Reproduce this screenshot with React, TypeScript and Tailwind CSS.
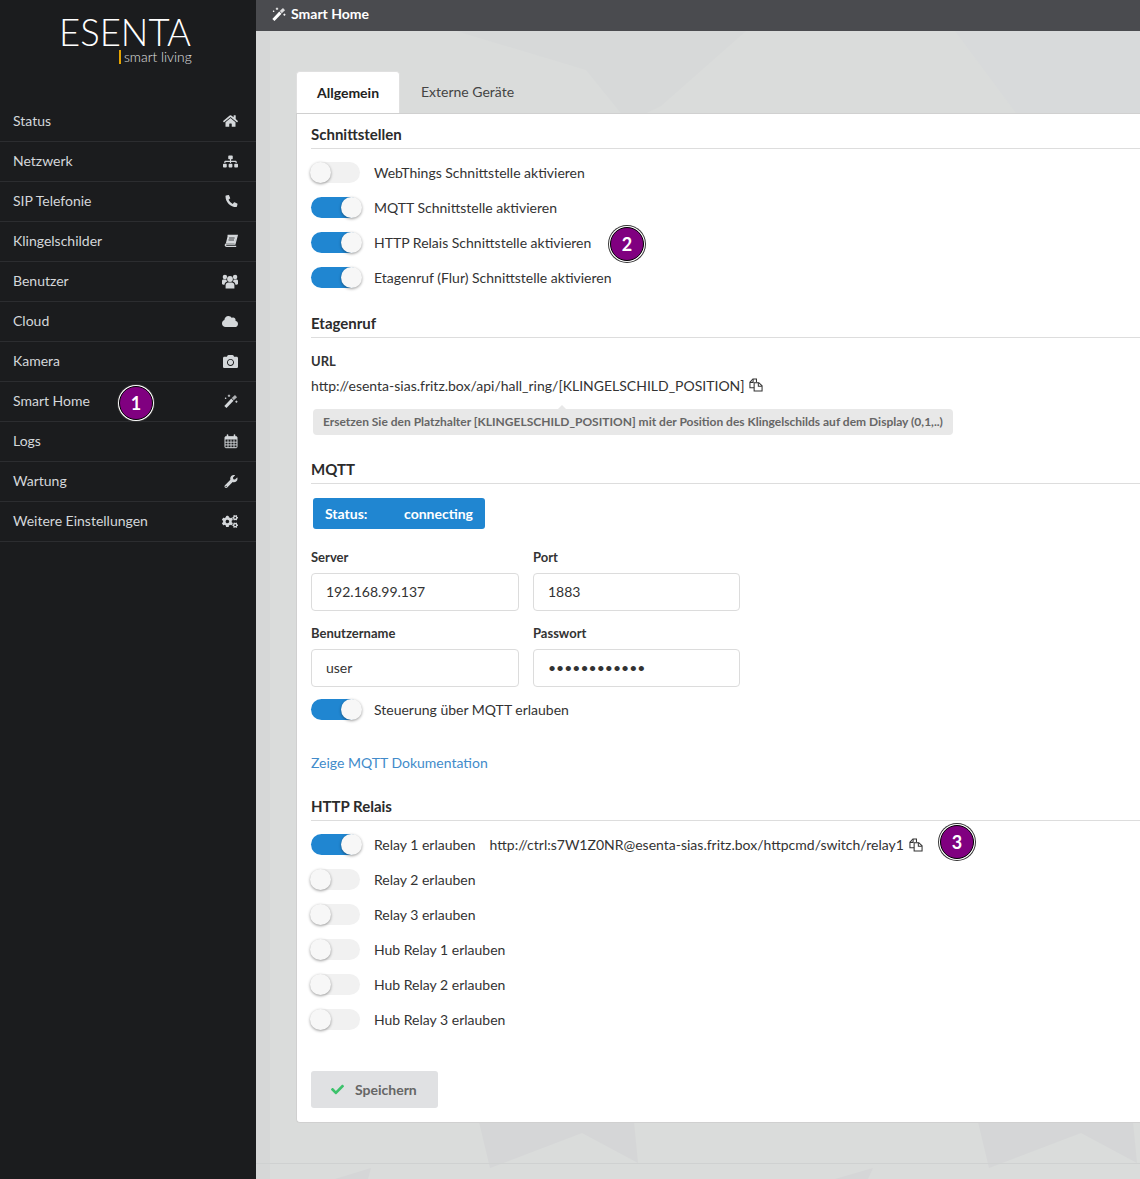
import React from 'react';
import { FaHome, FaSitemap, FaPhoneAlt, FaCloud, FaCamera, FaWrench, FaCogs, FaCheck } from 'react-icons/fa';

type IconProps = { className?: string };

const BookIcon = ({ className }: IconProps) => (
  <svg className={className} viewBox="0 0 14 14" fill="none">
    <path d="M3.6 1.5H13.2L10.9 10.2H2.4C1.5 10.2 1.2 11 1.5 11.6C1.7 12.1 2.1 12.4 2.7 12.4H12.2" stroke="currentColor" strokeWidth="1.3" />
    <path d="M3.8 1.5H13L10.8 9.6H2.1L1.5 10.8Z" fill="currentColor" />
    <path d="M5 4H10.6M4.5 6H10" stroke="#1b1c1e" strokeWidth="0.8" />
  </svg>
);

const UsersIcon = ({ className }: IconProps) => (
  <svg className={className} viewBox="0 0 16 15" fill="currentColor">
    <circle cx="8" cy="5" r="2.9" />
    <circle cx="2.9" cy="3" r="2.2" />
    <circle cx="13.1" cy="3" r="2.2" />
    <path d="M3.6 14.5V11.4C3.6 9.2 4.9 8.4 6.2 8.4H9.8C11.1 8.4 12.4 9.2 12.4 11.4V14.5Z" />
    <path d="M0 9.8V7.2C0 6 0.8 5.6 1.8 5.6H4.3C4.4 6.4 4.8 7 5.2 7.5C3.6 8 2.6 9.1 2.5 10.8C1.3 10.7 0 10.4 0 9.8Z" />
    <path d="M16 9.8V7.2C16 6 15.2 5.6 14.2 5.6H11.7C11.6 6.4 11.2 7 10.8 7.5C12.4 8 13.4 9.1 13.5 10.8C14.7 10.7 16 10.4 16 9.8Z" />
  </svg>
);

const WandIcon = ({ className }: IconProps) => (
  <svg className={className} viewBox="0 0 14 14" fill="none">
    <path d="M1.4 13L8.4 5.6" stroke="currentColor" strokeWidth="3" />
    <path d="M8.8 5.2L12 2.2" stroke="currentColor" strokeWidth="3" opacity="0.8" />
    <path d="M5 0.6V3M3.8 1.8H6.2M1.6 3.6V5M0.9 4.3H2.3M12.4 6.6V8.8M11.3 7.7H13.5" stroke="currentColor" strokeWidth="0.9" />
  </svg>
);

const CalendarIcon = ({ className }: IconProps) => (
  <svg className={className} viewBox="0 0 14 14" fill="none">
    <path d="M3.5 0.5V3M10.5 0.5V3" stroke="currentColor" strokeWidth="1.6" strokeLinecap="round" />
    <path d="M1 2.2H13V5H1Z" fill="currentColor" />
    <rect x="1" y="2.2" width="12" height="11" rx="0.8" stroke="currentColor" strokeWidth="1" />
    <path d="M1 7.7H13M1 10.4H13M4 5V13M7 5V13M10 5V13" stroke="currentColor" strokeWidth="0.9" />
  </svg>
);

const CopyIcon = ({ className }: IconProps) => (
  <svg className={className} viewBox="0 0 15 15" fill="none" stroke="currentColor" strokeWidth="1.1">
    <path d="M5.5 10.5H1V4.5L4.2 1H8V4.5" />
    <path d="M4.4 1.2V4.7H1" />
    <path d="M5.5 14V5H10.5L14 8.4V14Z" />
    <path d="M10 5.2V8.8H13.8" />
  </svg>
);

const menu = [
  { label: 'Status', icon: FaHome, size: 'h-[14px] w-[15px]' },
  { label: 'Netzwerk', icon: FaSitemap, size: 'h-[15px] w-[15px]' },
  { label: 'SIP Telefonie', icon: FaPhoneAlt, size: 'h-[12px] w-[13px]' },
  { label: 'Klingelschilder', icon: BookIcon, size: 'h-[14px] w-[14px]' },
  { label: 'Benutzer', icon: UsersIcon, size: 'h-[15px] w-[16px]' },
  { label: 'Cloud', icon: FaCloud, size: 'h-[15px] w-[16px]' },
  { label: 'Kamera', icon: FaCamera, size: 'h-[15px] w-[15px]' },
  { label: 'Smart Home', icon: WandIcon, size: 'h-[14px] w-[14px]' },
  { label: 'Logs', icon: CalendarIcon, size: 'h-[15px] w-[14px]' },
  { label: 'Wartung', icon: FaWrench, size: 'h-[13px] w-[14px]' },
  { label: 'Weitere Einstellungen', icon: FaCogs, size: 'h-[15px] w-[16px]' },
];

const Toggle = ({ on }: { on?: boolean }) => (
  <span className={`relative block h-[21px] w-[49px] shrink-0 rounded-full ${on ? 'bg-[#2086d1]' : 'bg-[#f1f1f1]'}`}>
    <span
      className={`absolute top-0 h-[21px] w-[21px] rounded-full bg-[#f7f7f7] shadow-[0_1px_3px_rgba(0,0,0,0.4)] ${on ? 'left-[30px]' : '-left-[1px]'}`}
    />
  </span>
);

const SwitchRow = ({ on, label, children }: { on?: boolean; label: string; children?: React.ReactNode }) => (
  <div className="flex h-[35px] items-center">
    <Toggle on={on} />
    <span className="ml-[14px]">{label}</span>
    {children}
  </div>
);

const Heading = ({ children, className }: { children: React.ReactNode; className: string }) => (
  <h3 className={`border-b border-[#dddddd] pb-[2px] text-[15px] leading-[24px] font-bold text-[#2b2b2b] ${className}`}>
    {children}
  </h3>
);

const Field = ({ label, value, width }: { label: string; value: string; width: string }) => (
  <div className={width}>
    <div className="mb-[5px] h-[22px] text-[13px] leading-[22px] font-bold">{label}</div>
    <div className="flex h-[38px] items-center rounded-[4px] border border-[#dcdcdc] bg-white pb-[2px] pl-[14px] text-[14px]">
      {value}
    </div>
  </div>
);

const Badge = ({ value, className }: { value: string; className: string }) => (
  <span
    className={`absolute flex h-[34px] w-[34px] items-center justify-center rounded-full border-[1px] border-black bg-[#800080] text-[18px] font-bold text-white shadow-[0_0_0_1px_#ffffff,0_0_0_2px_#333333] ${className}`}
  >
    {value}
  </span>
);

const Background = () => (
  <svg className="absolute inset-0 h-full w-full" viewBox="0 0 884 1179" preserveAspectRatio="none">
    <rect width="884" height="1179" fill="#dadcdb" />
    <polygon points="0,31 14,31 14,1179 0,1179" fill="#d6d7d7" />
    <polygon points="200,31 490,31 405,106 372,122 330,70" fill="#d7d9d9" />
    <polygon points="699,31 884,31 884,113 760,113" fill="#d8dadb" />
    <polygon points="223,1122 378,1122 382,1163 326,1133 234,1168" fill="#d5d6d7" />
    <polygon points="722,1122 877,1122 881,1163 825,1133 733,1168" fill="#d5d6d7" />
    <polygon points="79,1179 115,1168 112,1179" fill="#d5d6d7" />
    <polygon points="579,1179 617,1168 612,1179" fill="#d5d6d7" />
    <rect x="0" y="1163" width="884" height="1" fill="#cfd1d1" />
  </svg>
);

export default function App() {
  return (
    <div className="relative flex h-[1179px] w-[1140px] overflow-hidden font-['Lato','Carlito','Noto_Sans',sans-serif] text-[14px] text-[#333333]">
      <aside className="w-[256px] shrink-0 bg-[#1b1c1e] text-[#d4d7da]">
        <div className="h-[102px] pt-[14px] pl-[59px]">
          <div className="text-[36.5px] leading-[36px] font-light text-white">ESENTA</div>
          <div className="ml-[60px] flex h-[14px] items-center text-[13.8px] leading-none font-light text-[#e0e0e0]">
            <span className="mr-[3px] h-[14px] w-[2px] bg-[#e5a300]" />
            smart living
          </div>
        </div>
        <nav>
          {menu.map((item) => {
            const Icon = item.icon;
            return (
              <div
                key={item.label}
                className="flex h-[40px] items-center justify-between border-b border-[#2c2d30] pr-[18px] pb-[3px] pl-[13px] text-[14px]"
              >
                <span>{item.label}</span>
                <Icon className={`mt-[2px] ${item.size}`} />
              </div>
            );
          })}
        </nav>
      </aside>

      <main className="relative min-w-0 flex-1">
        <Background />
        <div className="relative">
          <header className="flex h-[31px] items-center bg-[#4a4b4f] pb-[4px] pl-[16px] text-[14px] font-bold text-white">
            <WandIcon className="mr-[5px] h-[14px] w-[14px]" />
            Smart Home
          </header>
          <div className="pt-[40px] pl-[40px]">
            <div className="flex h-[42px]">
              <div className="flex w-[104px] items-center justify-center rounded-t-[4px] border border-b-0 border-[#e0e0e0] bg-white pb-[1px] text-[14px] font-bold text-[#222222]">
                Allgemein
              </div>
              <div className="flex items-center pb-[1px] pl-[21px] text-[14px] text-[#444444]">Externe Geräte</div>
            </div>
            <section className="h-[1010px] rounded-bl-[4px] border-t border-b border-l border-[#d0d0d0] bg-white pl-[14px]">
              <Heading className="mt-[8px]">Schnittstellen</Heading>
              <div className="mt-[6px]">
                <SwitchRow label="WebThings Schnittstelle aktivieren" />
                <SwitchRow on label="MQTT Schnittstelle aktivieren" />
                <SwitchRow on label="HTTP Relais Schnittstelle aktivieren" />
                <SwitchRow on label="Etagenruf (Flur) Schnittstelle aktivieren" />
              </div>

              <Heading className="mt-[16px]">Etagenruf</Heading>
              <div className="mt-[12px] h-[22px] text-[13px] leading-[22px] font-bold">URL</div>
              <div className="mt-[1px] flex h-[24px] items-center text-[14px]">
                http://esenta-sias.fritz.box/api/hall_ring/[KLINGELSCHILD_POSITION]
                <CopyIcon className="ml-[4px] h-[14px] w-[14px]" />
              </div>
              <div className="relative mt-[12px] ml-[2px] w-[640px] rounded-[4px] bg-[#e8e8e8] px-[10px] py-[5px] text-[12px] leading-[16px] font-bold whitespace-nowrap text-[#666666]">
                <span className="absolute -top-[4px] left-[245px] h-0 w-0 border-x-[4px] border-b-[4px] border-x-transparent border-b-[#e8e8e8]" />
                Ersetzen Sie den Platzhalter [KLINGELSCHILD_POSITION] mit der Position des Klingelschilds auf dem Display (0,1,..)
              </div>

              <Heading className="mt-[22px]">MQTT</Heading>
              <div className="mt-[14px] ml-[2px] flex h-[31px] w-[172px] items-center rounded-[3px] bg-[#2086d1] px-[12px] font-bold text-white">
                <span className="w-[80px]">Status:</span>
                connecting
              </div>

              <div className="mt-[17px] flex gap-[14px]">
                <Field label="Server" value="192.168.99.137" width="w-[208px]" />
                <Field label="Port" value="1883" width="w-[207px]" />
              </div>
              <div className="mt-[11px] flex gap-[14px]">
                <Field label="Benutzername" value="user" width="w-[208px]" />
                <Field label="Passwort" value="••••••••••••" width="w-[207px]" />
              </div>
              <div className="mt-[5px]">
                <SwitchRow on label="Steuerung über MQTT erlauben" />
              </div>

              <div className="mt-[25px] h-[22px] text-[14px] leading-[22px] text-[#428bca]">Zeige MQTT Dokumentation</div>

              <Heading className="mt-[20px]">HTTP Relais</Heading>
              <div className="mt-[6px]">
                <SwitchRow on label="Relay 1 erlauben">
                  <span className="ml-[14px]">http://ctrl:s7W1Z0NR@esenta-sias.fritz.box/httpcmd/switch/relay1</span>
                  <CopyIcon className="ml-[5px] h-[14px] w-[14px]" />
                </SwitchRow>
                <SwitchRow label="Relay 2 erlauben" />
                <SwitchRow label="Relay 3 erlauben" />
                <SwitchRow label="Hub Relay 1 erlauben" />
                <SwitchRow label="Hub Relay 2 erlauben" />
                <SwitchRow label="Hub Relay 3 erlauben" />
              </div>

              <button className="mt-[34px] flex h-[37px] w-[127px] items-center rounded-[3px] bg-[#e0e1e3] pb-[1px] pl-[20px] text-[14px] font-bold text-[#666666]">
                <FaCheck className="mr-[11px] h-[13px] w-[13px] text-[#3cc26b]" />
                Speichern
              </button>
            </section>
          </div>
        </div>
      </main>

      <Badge value="1" className="top-[386px] left-[119px]" />
      <Badge value="2" className="top-[227px] left-[610px]" />
      <Badge value="3" className="top-[825px] left-[940px]" />
    </div>
  );
}
